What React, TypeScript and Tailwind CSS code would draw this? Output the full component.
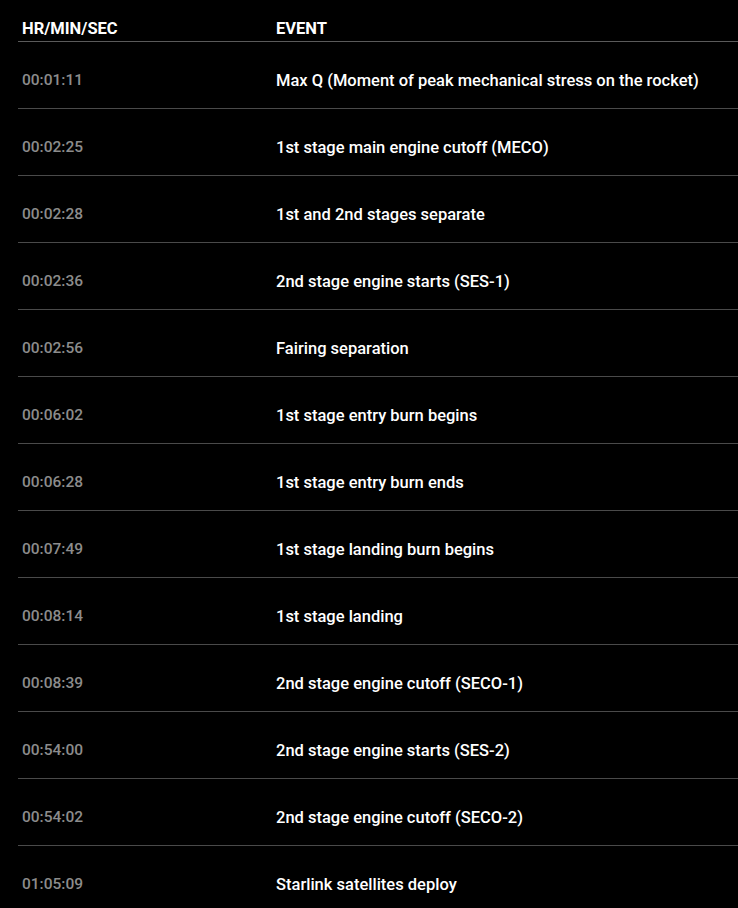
const timeline = [
  { time: "00:01:11", event: "Max Q (Moment of peak mechanical stress on the rocket)" },
  { time: "00:02:25", event: "1st stage main engine cutoff (MECO)" },
  { time: "00:02:28", event: "1st and 2nd stages separate" },
  { time: "00:02:36", event: "2nd stage engine starts (SES-1)" },
  { time: "00:02:56", event: "Fairing separation" },
  { time: "00:06:02", event: "1st stage entry burn begins" },
  { time: "00:06:28", event: "1st stage entry burn ends" },
  { time: "00:07:49", event: "1st stage landing burn begins" },
  { time: "00:08:14", event: "1st stage landing" },
  { time: "00:08:39", event: "2nd stage engine cutoff (SECO-1)" },
  { time: "00:54:00", event: "2nd stage engine starts (SES-2)" },
  { time: "00:54:02", event: "2nd stage engine cutoff (SECO-2)" },
  { time: "01:05:09", event: "Starlink satellites deploy" },
];

const App = () => {
  return (
    <section
      className="bg-black min-h-screen pl-[18px] font-['Roboto',sans-serif]"
      dir={"ltr"}
    >
      <div className="grid grid-cols-[258px_1fr] h-[42px] items-end border-b border-[#5a5a5a] pb-[4px] text-[16.5px] leading-none font-bold text-white">
        <div className="pl-[4px]">HR/MIN/SEC</div>
        <div>EVENT</div>
      </div>
      {timeline.map((row) => (
        <div
          key={row.time}
          className="grid grid-cols-[258px_1fr] h-[67px] items-center pt-[12px] border-b border-[#4a4a4a]"
        >
          <div className="pl-[4px] text-[15.5px] text-[#8c8c8c] font-medium">{row.time}</div>
          <div className="text-[16.5px] text-white font-medium">{row.event}</div>
        </div>
      ))}
    </section>
  );
};

export default App;
